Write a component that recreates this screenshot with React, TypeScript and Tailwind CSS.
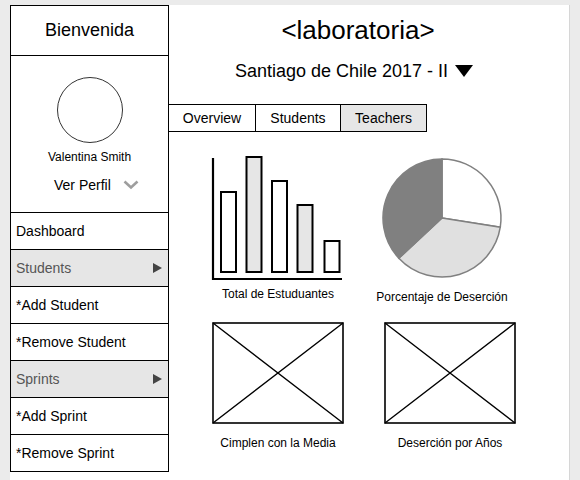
import React from 'react';

type MenuItem = { label: string; group?: boolean };

const menu: MenuItem[] = [
  { label: 'Dashboard' },
  { label: 'Students', group: true },
  { label: '*Add Student' },
  { label: '*Remove Student' },
  { label: 'Sprints', group: true },
  { label: '*Add Sprint' },
  { label: '*Remove Sprint' },
];

const tabs = [
  { label: 'Overview', w: 'w-[87px]' },
  { label: 'Students', w: 'w-[85px]' },
  { label: 'Teachers', w: 'w-[86px]', active: true },
];

// bar chart: [x, top] in svg coords, bottom at 121
const bars = [
  { x: 13, top: 41, fill: '#ffffff' },
  { x: 38.5, top: 6, fill: '#e6e6e6' },
  { x: 64, top: 30, fill: '#ffffff' },
  { x: 89.5, top: 54, fill: '#e6e6e6' },
  { x: 116.5, top: 90, fill: '#ffffff' },
];

function BarChart() {
  return (
    <svg width="140" height="135" viewBox="0 0 140 135">
      {bars.map((b, i) => (
        <rect key={i} x={b.x} y={b.top} width="15" height={121 - b.top} fill={b.fill} stroke="#000" strokeWidth="2" />
      ))}
      <path d="M5 7 L5 128 L134 128" fill="none" stroke="#000" strokeWidth="2.2" />
    </svg>
  );
}

function PieChart() {
  return (
    <svg width="124" height="135" viewBox="0 0 124 135">
      <path d="M62 67 L62 8 A59 59 0 0 1 120.27 76.23 Z" fill="#ffffff" stroke="#808080" strokeWidth="1.5" />
      <path d="M62 67 L120.27 76.23 A59 59 0 0 1 18.85 107.24 Z" fill="#e0e0e0" stroke="#808080" strokeWidth="1.5" />
      <path d="M62 67 L18.85 107.24 A59 59 0 0 1 62 8 Z" fill="#808080" stroke="#808080" strokeWidth="1.5" />
    </svg>
  );
}

function Placeholder() {
  return (
    <svg width="132" height="102" viewBox="0 0 132 102">
      <rect x="1" y="1" width="130" height="100" fill="#fff" stroke="#000" strokeWidth="1.6" />
      <path d="M1 1 L131 101 M131 1 L1 101" stroke="#000" strokeWidth="1.4" />
    </svg>
  );
}

export default function App() {
  return (
    <div className="h-[480px] w-[580px] overflow-hidden bg-[#ebebeb] pl-[10px] pt-[5px] font-['Liberation_Sans',Arial,sans-serif] text-black">
      <div className="flex h-[480px] w-[560px] border-r border-[#d6d6d6] bg-white">
        {/* ── Sidebar ───────────────────────────────────────── */}
        <aside className="w-[159px] shrink-0 self-start border border-black">
          <div className="flex h-[49px] items-center justify-center text-[18px]">Bienvenida</div>
          <div className="h-[157px] border-t border-black pt-[21px]">
            <div className="mx-auto h-[66px] w-[66px] rounded-full border border-[#333]" />
            <p className="mt-[6px] text-center text-[12px] leading-[16px]">Valentina Smith</p>
            <div className="mt-[10px] flex items-center pl-[43px] text-[14px] leading-[20px]">
              <span>Ver Perfil</span>
              <svg className="ml-[12px]" width="16" height="10" viewBox="0 0 16 10">
                <polyline points="1.5,1.5 8,7.5 14.5,1.5" fill="none" stroke="#9e9e9e" strokeWidth="2.6" />
              </svg>
            </div>
          </div>
          {menu.map((m) => (
            <div
              key={m.label}
              className={`flex h-[37px] items-center justify-between border-t border-black pl-[5px] pr-[6px] text-[14px] ${
                m.group ? 'bg-[#e6e6e6] text-[#555]' : 'bg-white'
              }`}
            >
              <span>{m.label}</span>
              {m.group && (
                <svg width="9" height="10" viewBox="0 0 9 10">
                  <path d="M0 0 L9 5 L0 10 Z" fill="#444" />
                </svg>
              )}
            </div>
          ))}
        </aside>

        {/* ── Main ──────────────────────────────────────────── */}
        <main className="flex-1">
          <h1 className="mt-[10px] pr-[22px] text-center text-[26px] leading-[30px]">&lt;laboratoria&gt;</h1>
          <div className="mt-[14px] flex items-center justify-center pr-[30px] text-[18px] leading-[24px]">
            <span>Santiago de Chile 2017 - II</span>
            <svg className="ml-[7px]" width="18" height="12" viewBox="0 0 18 12">
              <path d="M0 0 L18 0 L9 12 Z" fill="#000" />
            </svg>
          </div>

          <div className="mt-[21px] flex">
            {tabs.map((t) => (
              <div
                key={t.label}
                className={`flex h-[28px] items-center justify-center border-y border-r border-black text-[14px] ${t.w} ${
                  t.active ? 'bg-[#e6e6e6]' : 'bg-white'
                }`}
              >
                {t.label}
              </div>
            ))}
          </div>

          <div className="mt-[19px] flex gap-[32px] pl-[39px]">
            <div className="flex w-[140px] flex-col items-center">
              <BarChart />
              <p className="text-[12px] leading-[16px]">Total de Estuduantes</p>
            </div>
            <div className="flex w-[124px] flex-col items-center">
              <PieChart />
              <p className="mt-[3px] whitespace-nowrap text-[12px] leading-[16px]">Porcentaje de Deserción</p>
            </div>
          </div>

          <div className="mt-[17px] flex gap-[32px] pl-[39px]">
            <div className="flex w-[140px] flex-col items-center">
              <Placeholder />
              <p className="mt-[11px] text-[12px] leading-[16px]">Cimplen con la Media</p>
            </div>
            <div className="flex w-[140px] flex-col items-center">
              <Placeholder />
              <p className="mt-[11px] text-[12px] leading-[16px]">Deserción por Años</p>
            </div>
          </div>
        </main>
      </div>
    </div>
  );
}
